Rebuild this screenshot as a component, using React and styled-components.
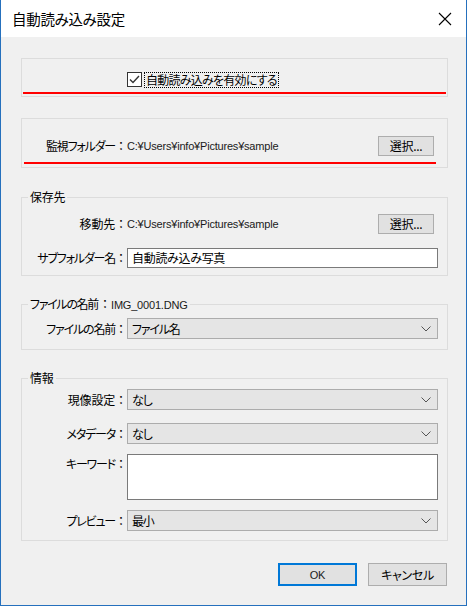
import React from "react";
import styled, { createGlobalStyle } from "styled-components";

const GlobalStyle = createGlobalStyle`
  html, body {
    margin: 0;
    padding: 0;
    background: #ffffff;
  }
  * {
    box-sizing: border-box;
  }
`;

const Window = styled.div`
  width: 467px;
  height: 606px;
  border: 1px solid #2570bd;
  border-top: none;
  background: #f0f0f0;
  font-family: "Noto Sans CJK JP", "Noto Sans", sans-serif;
  font-feature-settings: "palt";
  font-size: 12px;
  letter-spacing: -0.3px;
  color: #000;
  display: flex;
  flex-direction: column;
`;

const TitleBar = styled.div`
  height: 37px;
  background: #fff;
  display: flex;
  align-items: center;
  justify-content: space-between;
  padding: 0 14px 0 11px;
  font-size: 14.5px;
`;

const Content = styled.div`
  padding: 21px 18px 0 20px;
  display: flex;
  flex-direction: column;
`;

const Box = styled.div`
  border: 1px solid #dcdcdc;
  padding: ${(p) => p.$pad};
  margin-bottom: ${(p) => p.$mb}px;
`;

const Group = styled.fieldset`
  margin: 0 0 ${(p) => p.$mb}px 0;
  border: 1px solid #dcdcdc;
  padding: ${(p) => p.$pad};
  min-width: 0;
  display: flex;
  flex-direction: column;
`;

const Legend = styled.legend`
  line-height: 14px;
  padding: 0 2px;
  margin-left: 6px;
  font-size: 12px;
  letter-spacing: ${(p) => (p.$tight ? "-1.3px" : "-0.2px")};
`;

const Latin = styled.span`
  font-family: "Liberation Sans", Arial, sans-serif;
  font-size: 11px;
  letter-spacing: -0.2px;
  color: #1a1a1a;
`;

const Row = styled.div`
  display: grid;
  grid-template-columns: 105px 1fr;
  align-items: ${(p) => (p.$top ? "start" : "center")};
  margin-top: ${(p) => p.$mt || 0}px;
  min-height: ${(p) => p.$minh || 20}px;
`;

const Label = styled.div`
  text-align: right;
  line-height: 16px;
  white-space: nowrap;
  font-size: 12px;
  letter-spacing: ${(p) => (p.$kanji ? "-0.2px" : "-1.2px")};
  padding-top: ${(p) => (p.$top ? 2 : 0)}px;
`;

const Colon = styled.span`
  font-feature-settings: normal;
  letter-spacing: 0;
  display: inline-block;
  width: 12px;
  margin-left: ${(p) => p.$ml || 0}px;
  text-align: center;
`;

const PathCell = styled.div`
  display: flex;
  align-items: center;
  justify-content: space-between;
  padding-right: 4px;
`;

const Button = styled.div`
  width: ${(p) => p.$w}px;
  height: ${(p) => p.$h}px;
  background: #e1e1e1;
  border: ${(p) => (p.$default ? "2px solid #0078d7" : "1px solid #adadad")};
  display: flex;
  align-items: center;
  justify-content: center;
  font-size: 12px;
  line-height: 14px;
`;

const TextInput = styled.div`
  height: ${(p) => p.$h}px;
  background: #fff;
  border: 1px solid #7a7a7a;
  padding: 1px 4px;
  line-height: 16px;
  display: flex;
  align-items: ${(p) => (p.$multi ? "flex-start" : "center")};
`;

const Combo = styled.div`
  height: 21px;
  background: #e5e5e5;
  border: 1px solid #acacac;
  display: flex;
  align-items: center;
  justify-content: space-between;
  padding: 0 6px 0 4px;
  line-height: 16px;
  letter-spacing: -1.2px;
`;

const CheckRow = styled.div`
  display: flex;
  align-items: center;
  gap: 3px;
  height: 15px;
`;

const CheckBox = styled.div`
  width: 15px;
  height: 15px;
  border: 1px solid #333;
  background: #fff;
  display: flex;
  align-items: center;
  justify-content: center;
`;

const FocusLabel = styled.span`
  outline: 1px dotted #000;
  outline-offset: 0;
  line-height: 14px;
  padding: 0 1px;
  letter-spacing: -0.75px;
`;

const RedLine = styled.div`
  height: 2px;
  background: #ff0000;
  margin: ${(p) => p.$mt}px ${(p) => p.$inset}px 0;
`;

const Footer = styled.div`
  display: flex;
  justify-content: flex-end;
  gap: 11px;
  margin-top: 22px;
  padding-right: 1px;
`;

const Chevron = () => (
  <svg width="10" height="6" viewBox="0 0 10 6">
    <polyline points="0.5,0.5 5,5 9.5,0.5" fill="none" stroke="#555" strokeWidth="1" />
  </svg>
);

const CloseIcon = () => (
  <svg width="14" height="14" viewBox="0 0 14 14">
    <path d="M1 1 L13 13 M13 1 L1 13" stroke="#000" strokeWidth="1.1" />
  </svg>
);

const CheckMark = () => (
  <svg width="11" height="9" viewBox="0 0 11 9">
    <polyline points="1,4.5 4,7.5 10,1" fill="none" stroke="#333" strokeWidth="1.4" />
  </svg>
);

const Select = ({ value }) => (
  <Combo>
    <span>{value}</span>
    <Chevron />
  </Combo>
);

const FieldLabel = ({ children, top, kanji }) => (
  <Label $top={top} $kanji={kanji}>
    {children}
    <Colon>：</Colon>
  </Label>
);

export default function App() {
  const path = "C:¥Users¥info¥Pictures¥sample";
  return (
    <>
      <GlobalStyle />
      <Window>
        <TitleBar>
          <span>自動読み込み設定</span>
          <CloseIcon />
        </TitleBar>
        <Content>
          <Box $pad="13px 0 2px 0" $mb={21}>
            <Row $minh={15}>
              <div />
              <CheckRow>
                <CheckBox>
                  <CheckMark />
                </CheckBox>
                <FocusLabel>自動読み込みを有効にする</FocusLabel>
              </CheckRow>
            </Row>
            <RedLine $mt={5} $inset={1} />
          </Box>

          <Box $pad="17px 9px 3px 0" $mb={22}>
            <Row>
              <FieldLabel>監視フォルダー</FieldLabel>
              <PathCell>
                <Latin>{path}</Latin>
                <Button $w={56} $h={20}>選択...</Button>
              </PathCell>
            </Row>
            <RedLine $mt={6} $inset={2} />
          </Box>

          <Group $pad="10px 9px 7px 0" $mb={21}>
            <Legend>保存先</Legend>
            <Row>
              <FieldLabel kanji>移動先</FieldLabel>
              <PathCell>
                <Latin>{path}</Latin>
                <Button $w={56} $h={20}>選択...</Button>
              </PathCell>
            </Row>
            <Row $mt={14}>
              <FieldLabel>サブフォルダー名</FieldLabel>
              <TextInput $h={20}>自動読み込み写真</TextInput>
            </Row>
          </Group>

          <Group $pad="6px 9px 10px 0" $mb={21}>
            <Legend $tight>
              ファイルの名前<Colon $ml={1}>：</Colon>
              <Latin>IMG_0001.DNG</Latin>
            </Legend>
            <Row>
              <FieldLabel>ファイルの名前</FieldLabel>
              <Select value="ファイル名" />
            </Row>
          </Group>

          <Group $pad="4px 9px 9px 0" $mb={0}>
            <Legend>情報</Legend>
            <Row>
              <FieldLabel kanji>現像設定</FieldLabel>
              <Select value="なし" />
            </Row>
            <Row $mt={13}>
              <FieldLabel>メタデータ</FieldLabel>
              <Select value="なし" />
            </Row>
            <Row $mt={10} $top>
              <FieldLabel top>キーワード</FieldLabel>
              <TextInput $h={46} $multi />
            </Row>
            <Row $mt={10}>
              <FieldLabel>プレビュー</FieldLabel>
              <Select value="最小" />
            </Row>
          </Group>

          <Footer>
            <Button $w={79} $h={23} $default>
              <Latin>OK</Latin>
            </Button>
            <Button $w={79} $h={23}>キャンセル</Button>
          </Footer>
        </Content>
      </Window>
    </>
  );
}
